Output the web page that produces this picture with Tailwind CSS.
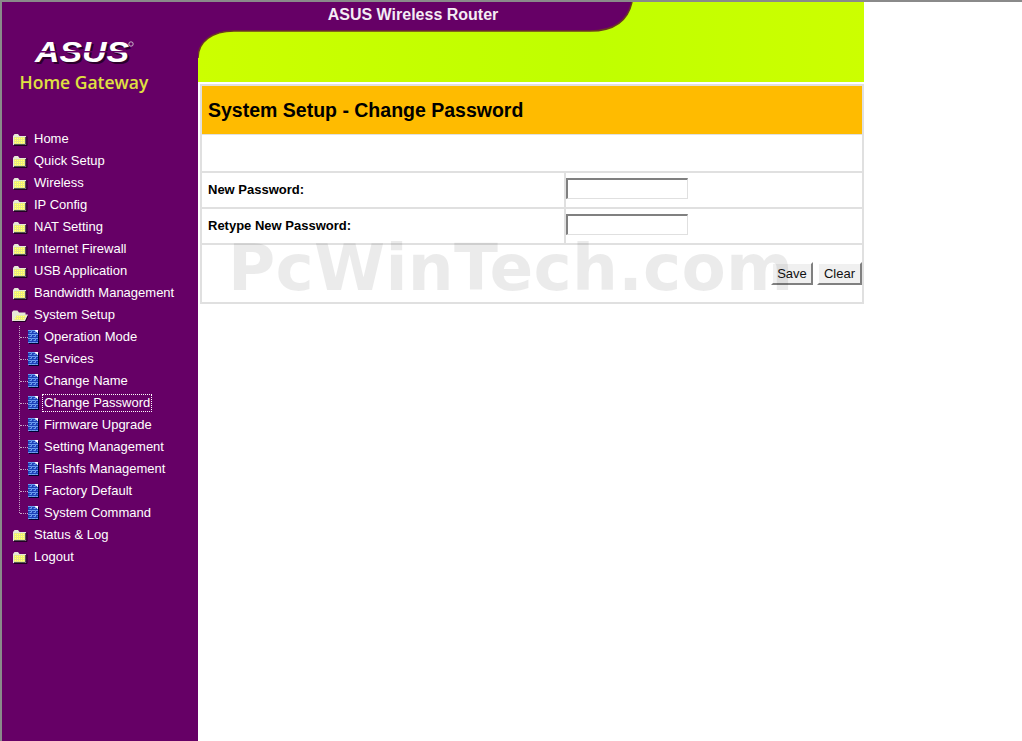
<!DOCTYPE html>
<html lang="en">
<head>
    <meta charset="UTF-8">
    <title>ASUS Wireless Router</title>
    <script src="https://cdn.jsdelivr.net/npm/@tailwindcss/browser@4"></script>
</head>
<body class="bg-white font-['Liberation_Sans',Arial,sans-serif]">
    <!-- shared icons -->
    <svg width="0" height="0" class="absolute">
        <defs>
            <linearGradient id="lime" x1="0" x2="1" y1="0" y2="0">
                <stop offset="0" stop-color="#ccff00"/>
                <stop offset="0.35" stop-color="#c4ff00"/>
                <stop offset="0.6" stop-color="#c0ff00"/>
                <stop offset="0.85" stop-color="#c8ff00"/>
                <stop offset="1" stop-color="#ccff00"/>
            </linearGradient>
            <pattern id="dither" width="2" height="2" patternUnits="userSpaceOnUse">
                <rect width="2" height="2" fill="#f8f860"/>
                <rect width="1" height="1" fill="#d8d8b0"/>
                <rect x="1" y="1" width="1" height="1" fill="#ffff80"/>
            </pattern>
            <pattern id="maze" width="4" height="4" patternUnits="userSpaceOnUse">
                <rect width="4" height="4" fill="#1c40b8"/>
                <path d="M0 .5H3.5V2.5H1.5" stroke="#6f9ff0" stroke-width="1" fill="none"/>
            </pattern>
            <symbol id="folder" viewBox="0 0 16 13">
                <path d="M1 3V12H14V3H7.5L6 1H2.5z" fill="#e8e8d8"/>
                <rect x="2" y="4" width="11" height="7" fill="url(#dither)"/>
                <path d="M15 3.5V12.5H2" stroke="#220022" fill="none"/>
                <path d="M2 11.5H13.5V4" stroke="#555" fill="none"/>
            </symbol>
            <symbol id="folder-open" viewBox="0 0 16 13">
                <path d="M0 3V12H13L16 5.5H13.5V3.5H7L5.5 1.5H1.5z" fill="#e8e8d8"/>
                <path d="M4.5 6.5H14.5L11.8 11H2z" fill="url(#dither)"/>
                <path d="M1 12.5H13.5L16 7" stroke="#220022" fill="none"/>
            </symbol>
            <symbol id="doc" viewBox="0 0 11 14">
                <path d="M1 1H11V14H1z" fill="#000033"/>
                <path d="M0 0H10V13H0z" fill="url(#maze)"/>
                <path d="M6.5 0H10V3.5z" fill="#ffffff"/>
            </symbol>
        </defs>
    </svg>

    <div class="flex h-screen overflow-hidden border-t-2 border-l-2 border-[#8a8a8a]">
        <!-- Sidebar -->
        <aside class="w-[196px] shrink-0 bg-[#660066] text-white text-[13px]">
            <div class="h-[126px] flex flex-col items-center pt-[33px] pr-[32px]">
                <svg width="104" height="36" viewBox="0 0 104 36">
                    <text x="5" y="29" fill="#2b002b" font-family="Liberation Sans" font-weight="700" font-style="italic" font-size="30" textLength="94" lengthAdjust="spacingAndGlyphs">ASUS</text>
                    <text x="3" y="27" fill="#ffffff" font-family="Liberation Sans" font-weight="700" font-style="italic" font-size="30" textLength="94" lengthAdjust="spacingAndGlyphs">ASUS</text>
                    <rect x="0" y="16" width="100" height="1.5" fill="#660066"/>
                    <circle cx="99" cy="9" r="2.2" fill="none" stroke="#ddd" stroke-width=".8"/>
                </svg>
                <div class="text-[17.5px] leading-[22px] font-semibold text-[#e0e040] font-['Open_Sans',sans-serif] whitespace-nowrap">Home Gateway</div>
            </div>

            <nav>
                <a class="flex items-center gap-[6px] h-[22px] pl-[10px]"><svg width="16" height="13"><use href="#folder"/></svg>Home</a>
                <a class="flex items-center gap-[6px] h-[22px] pl-[10px]"><svg width="16" height="13"><use href="#folder"/></svg>Quick Setup</a>
                <a class="flex items-center gap-[6px] h-[22px] pl-[10px]"><svg width="16" height="13"><use href="#folder"/></svg>Wireless</a>
                <a class="flex items-center gap-[6px] h-[22px] pl-[10px]"><svg width="16" height="13"><use href="#folder"/></svg>IP Config</a>
                <a class="flex items-center gap-[6px] h-[22px] pl-[10px]"><svg width="16" height="13"><use href="#folder"/></svg>NAT Setting</a>
                <a class="flex items-center gap-[6px] h-[22px] pl-[10px]"><svg width="16" height="13"><use href="#folder"/></svg>Internet Firewall</a>
                <a class="flex items-center gap-[6px] h-[22px] pl-[10px]"><svg width="16" height="13"><use href="#folder"/></svg>USB Application</a>
                <a class="flex items-center gap-[6px] h-[22px] pl-[10px]"><svg width="16" height="13"><use href="#folder"/></svg>Bandwidth Management</a>
                <a class="flex items-center gap-[6px] h-[22px] pl-[10px]"><svg width="16" height="13"><use href="#folder-open"/></svg>System Setup</a>

                <!-- tree under System Setup -->
                <div class="ml-[17px] mb-[11px] h-[187px] border-l border-dotted border-[#c8a8c8]">
                    <a class="flex items-center h-[22px]"><span class="w-[8px] border-t border-dotted border-[#c8a8c8]"></span><svg width="11" height="14"><use href="#doc"/></svg><span class="ml-[4px] px-[1px]">Operation Mode</span></a>
                    <a class="flex items-center h-[22px]"><span class="w-[8px] border-t border-dotted border-[#c8a8c8]"></span><svg width="11" height="14"><use href="#doc"/></svg><span class="ml-[4px] px-[1px]">Services</span></a>
                    <a class="flex items-center h-[22px]"><span class="w-[8px] border-t border-dotted border-[#c8a8c8]"></span><svg width="11" height="14"><use href="#doc"/></svg><span class="ml-[4px] px-[1px]">Change Name</span></a>
                    <a class="flex items-center h-[22px]"><span class="w-[8px] border-t border-dotted border-[#c8a8c8]"></span><svg width="11" height="14"><use href="#doc"/></svg><span class="ml-[4px] px-[1px] leading-[16px] outline-1 outline-dotted outline-white">Change Password</span></a>
                    <a class="flex items-center h-[22px]"><span class="w-[8px] border-t border-dotted border-[#c8a8c8]"></span><svg width="11" height="14"><use href="#doc"/></svg><span class="ml-[4px] px-[1px]">Firmware Upgrade</span></a>
                    <a class="flex items-center h-[22px]"><span class="w-[8px] border-t border-dotted border-[#c8a8c8]"></span><svg width="11" height="14"><use href="#doc"/></svg><span class="ml-[4px] px-[1px]">Setting Management</span></a>
                    <a class="flex items-center h-[22px]"><span class="w-[8px] border-t border-dotted border-[#c8a8c8]"></span><svg width="11" height="14"><use href="#doc"/></svg><span class="ml-[4px] px-[1px]">Flashfs Management</span></a>
                    <a class="flex items-center h-[22px]"><span class="w-[8px] border-t border-dotted border-[#c8a8c8]"></span><svg width="11" height="14"><use href="#doc"/></svg><span class="ml-[4px] px-[1px]">Factory Default</span></a>
                    <a class="flex items-center h-[22px]"><span class="w-[8px] border-t border-dotted border-[#c8a8c8]"></span><svg width="11" height="14"><use href="#doc"/></svg><span class="ml-[4px] px-[1px]">System Command</span></a>
                </div>

                <a class="flex items-center gap-[6px] h-[22px] pl-[10px]"><svg width="16" height="13"><use href="#folder"/></svg>Status &amp; Log</a>
                <a class="flex items-center gap-[6px] h-[22px] pl-[10px]"><svg width="16" height="13"><use href="#folder"/></svg>Logout</a>
            </nav>
        </aside>

        <!-- Main -->
        <main class="w-[666px] shrink-0">
            <header class="relative h-[80px] bg-[#ccff00]">
                <svg class="absolute inset-0" width="666" height="80" viewBox="0 0 666 80">
                    <rect width="666" height="80" fill="url(#lime)"/>
                    <path d="M0 0H434C430 18 418 29 392 29H36C14 29 0 40 0 56z" fill="#660066"/>
                    <path d="M0 56C0 40 14 29 36 29H392C418 29 430 18 434 0" fill="none" stroke="#6b3a20" stroke-width="1.5"/>
                </svg>
                <div class="relative w-[430px] h-[29px] pb-[3px] flex items-center justify-center text-[16px] font-bold text-[#f4ecf4]">ASUS Wireless Router</div>
            </header>

            <div class="relative ml-[2px] mt-[2px] border-2 border-[#e0e0e0] bg-white">
                <div class="h-[48px] bg-[#ffbb00] flex items-center pl-[6px] pt-[2px] text-[19.5px] font-bold text-black">System Setup - Change Password</div>
                <div class="h-[37px] border-t border-[#e0e0e0]"></div>
                <div class="flex h-[36px] border-t-2 border-[#e0e0e0] text-[13px] font-bold text-black">
                    <div class="w-[364px] pl-[6px] flex items-center border-r-2 border-[#e0e0e0]">New Password:</div>
                    <div class="flex items-center pb-[3px]">
                        <input type="password" class="w-[122px] h-[21px] bg-white border border-[#e0e0e0] border-t-2 border-l-2 border-t-[#808080] border-l-[#808080]">
                    </div>
                </div>
                <div class="flex h-[36px] border-t-2 border-[#e0e0e0] text-[13px] font-bold text-black">
                    <div class="w-[364px] pl-[6px] flex items-center border-r-2 border-[#e0e0e0]">Retype New Password:</div>
                    <div class="flex items-center pb-[3px]">
                        <input type="password" class="w-[122px] h-[21px] bg-white border border-[#e0e0e0] border-t-2 border-l-2 border-t-[#808080] border-l-[#808080]">
                    </div>
                </div>
                <div class="flex justify-end items-start gap-[4px] h-[59px] pt-[17px] border-t-2 border-[#e0e0e0]">
                    <button class="w-[42px] h-[23px] bg-[#f0f0f0] text-[13px] text-[#111] border-2 border-t-white border-l-white border-r-[#808080] border-b-[#808080]">Save</button>
                    <button class="w-[45px] h-[23px] bg-[#f0f0f0] text-[13px] text-[#111] border-2 border-t-white border-l-white border-r-[#808080] border-b-[#808080]">Clear</button>
                </div>
                <!-- watermark sits over the form -->
                <div class="absolute left-[26px] top-[146px] text-[64.5px] leading-[72px] tracking-[0.25px] font-bold text-black/[0.08] font-['DejaVu_Sans',sans-serif] whitespace-nowrap pointer-events-none">PcWinTech.com</div>
            </div>
        </main>
    </div>
</body>
</html>
